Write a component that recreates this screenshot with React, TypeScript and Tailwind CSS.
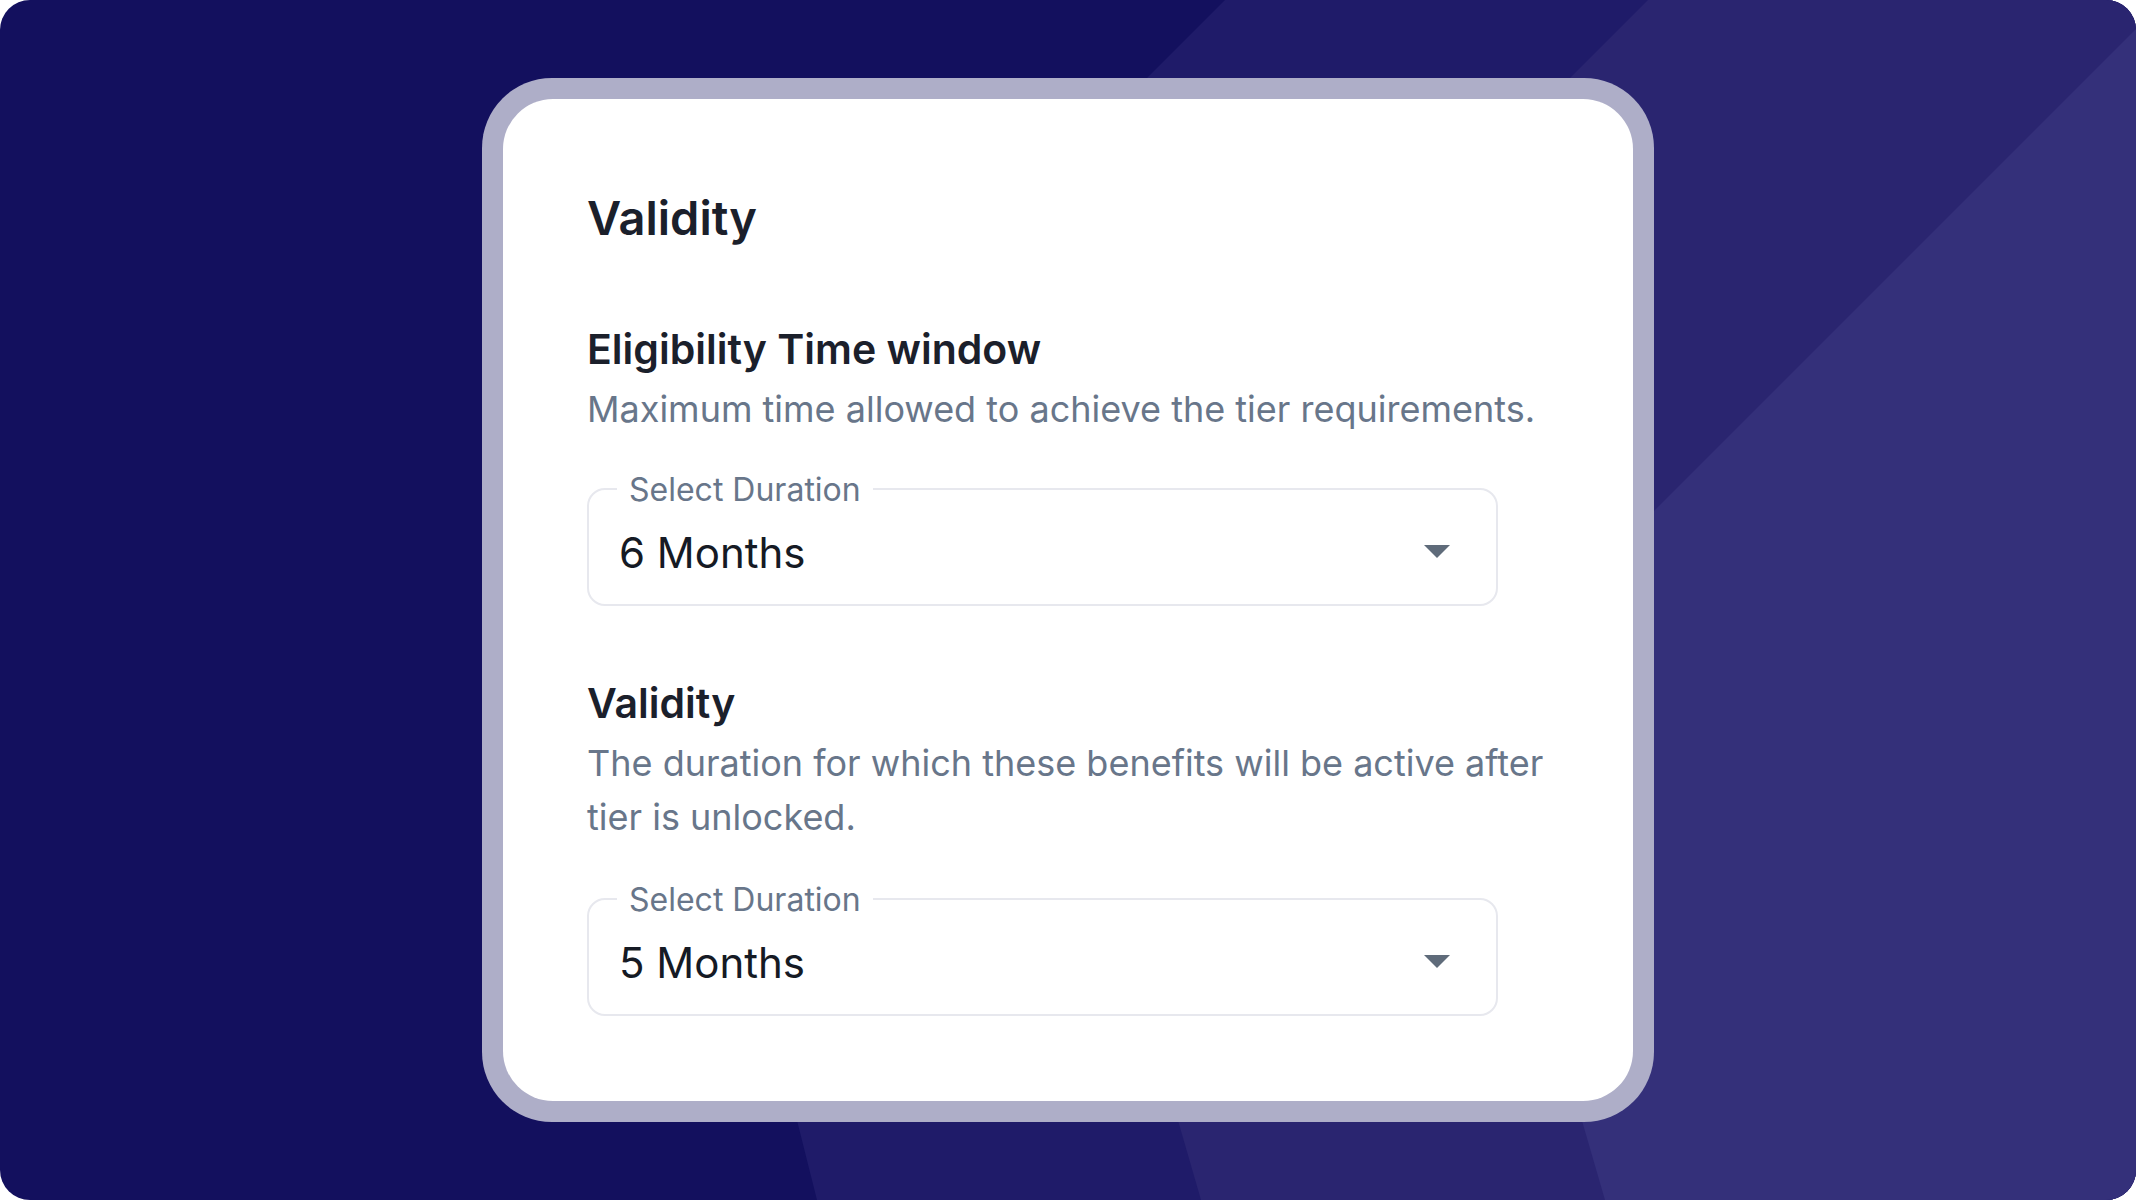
import React from "react";

const font = { fontFamily: "Inter, 'Noto Sans', sans-serif" };

const Backdrop = () => (
  <svg className="absolute inset-0" width="2136" height="1200" viewBox="0 0 2136 1200">
    <rect width="2136" height="1200" fill="#13105E" />
    <polygon points="1225,0 2136,0 2136,1200 817,1200 658,567" fill="#1F1B69" />
    <polygon points="1648,0 2136,0 2136,1200 1201,1200 1032,616" fill="#2A2570" />
    <polygon points="2136,29 2136,1200 1605,1200 1461,704" fill="#34307A" />
  </svg>
);

interface SelectProps {
  label: string;
  value: string;
}

const DurationSelect: React.FC<SelectProps> = ({ label, value }) => (
  <div className="relative h-[118px] rounded-[18px] border-2 border-[#E7E8EE] pt-[12px] pl-[30px] pr-[46px] flex items-center justify-between">
    <span className="absolute left-[28px] top-0 -translate-y-1/2 bg-white px-[12px] text-[32px] leading-[38px] text-[#68768A]">
      {label}
    </span>
    <span className="text-[42px] leading-[50px] text-[#151A24]">{value}</span>
    <svg width="26" height="13" viewBox="0 0 26 13" className="-mt-[4px]">
      <polygon points="0,0 26,0 13,13" fill="#5F6B7A" />
    </svg>
  </div>
);

const App = () => {
  return (
    <div className="w-[2136px] h-[1200px] bg-white">
      <div className="relative w-[2136px] h-[1200px] overflow-hidden rounded-[30px] flex items-center justify-center" style={font}>
        <Backdrop />
        <div className="relative w-[1172px] h-[1044px] rounded-[70px] bg-[#AEAEC8] p-[21px]">
          <div className="h-full rounded-[50px] bg-white px-[84px] pt-[93px]">
            <h1 className="text-[47px] leading-[52px] font-semibold text-[#1B202B]">Validity</h1>

            <h2 className="mt-[82px] text-[41px] leading-[46px] font-semibold text-[#1B202B]">Eligibility Time window</h2>
            <p className="mt-[10px] text-[36px] leading-[54px] text-[#68768A]">
              Maximum time allowed to achieve the tier requirements.
            </p>
            <div className="mt-[52px] w-[911px]">
              <DurationSelect label="Select Duration" value="6 Months" />
            </div>

            <h2 className="mt-[74px] text-[41px] leading-[46px] font-semibold text-[#1B202B]">Validity</h2>
            <p className="mt-[10px] text-[36px] leading-[54px] text-[#68768A]">
              The duration for which these benefits will be active after tier is unlocked.
            </p>
            <div className="mt-[54px] w-[911px]">
              <DurationSelect label="Select Duration" value="5 Months" />
            </div>
          </div>
        </div>
      </div>
    </div>
  );
};

export default App;
